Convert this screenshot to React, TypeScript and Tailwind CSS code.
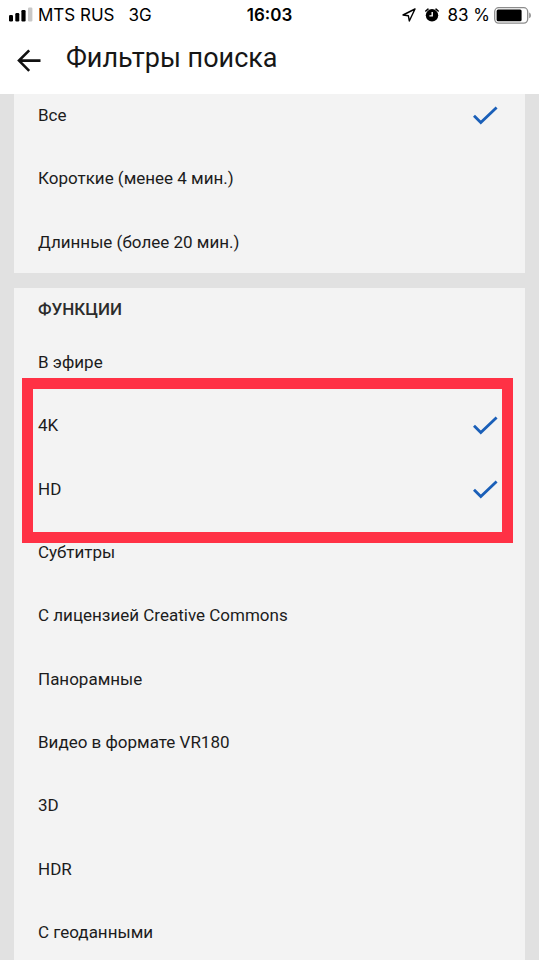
import React from 'react';

type Option = { label: string; checked?: boolean };

const durations: Option[] = [
  { label: 'Все', checked: true },
  { label: 'Короткие (менее 4 мин.)' },
  { label: 'Длинные (более 20 мин.)' },
];

const features: Option[] = [
  { label: 'В эфире' },
  { label: '4K', checked: true },
  { label: 'HD', checked: true },
  { label: 'Субтитры' },
  { label: 'С лицензией Creative Commons' },
  { label: 'Панорамные' },
  { label: 'Видео в формате VR180' },
  { label: '3D' },
  { label: 'HDR' },
  { label: 'С геоданными' },
];

const StatusBar = () => (
  <div className="grid h-[30px] grid-cols-[1fr_auto_1fr] items-center px-2 font-['Inter',sans-serif] text-[17px] leading-[30px] text-black">
    <div className="flex items-center">
      <svg width="26" height="16" viewBox="0 0 26 16" className="mr-1" aria-hidden="true">
        <rect x="1" y="8" width="4" height="6.5" rx="1.2" />
        <rect x="7.3" y="6" width="4" height="8.5" rx="1.2" />
        <rect x="13.4" y="3" width="4.2" height="11.5" rx="1.2" />
        <rect x="20" y="0.5" width="4.4" height="14" rx="1.2" fill="#c8c8c8" />
      </svg>
      <span>MTS RUS</span>
      <span className="ml-[14px]">3G</span>
    </div>
    <span className="px-px font-semibold">16:03</span>
    <div className="flex items-center justify-end">
      <svg width="14" height="14" viewBox="0 0 14 14" className="mr-2" aria-hidden="true">
        <path d="M13 1 1 7l5.4.8.9 5.2Z" fill="none" stroke="#000" strokeWidth="1.4" strokeLinejoin="round" />
      </svg>
      <svg width="16" height="14" viewBox="0 0 16 14" className="mr-2" aria-hidden="true">
        <circle cx="8" cy="7.3" r="6.2" />
        <path d="M1.8 3 4 1.2M14.2 3 12 1.2" stroke="#000" strokeWidth="1.6" strokeLinecap="round" />
        <path d="M8.2 4v3.9H5.4" fill="none" stroke="#fff" strokeWidth="1.4" />
      </svg>
      <span className="mr-1">83 %</span>
      <svg width="37" height="17" viewBox="0 0 37 17" aria-hidden="true">
        <rect x="0.7" y="0.7" width="33" height="15.4" rx="4" fill="none" stroke="#8c8c8c" strokeWidth="1.3" />
        <rect x="2.6" y="2.6" width="25" height="11.6" rx="1.5" />
        <path d="M35.2 5.6c2.2.8 2.2 4.8 0 5.6Z" fill="#8c8c8c" />
      </svg>
    </div>
  </div>
);

const OptionRow = ({ option, type, name }: { option: Option; type: 'radio' | 'checkbox'; name: string }) => (
  <li>
    <label className="flex h-full items-center justify-between pt-px pr-[27px] pl-6">
      <span>{option.label}</span>
      <input type={type} name={name} defaultChecked={option.checked} className="peer sr-only" />
      <svg width="26" height="20" viewBox="0 0 26 20" className="invisible peer-checked:visible" aria-hidden="true">
        <path d="M2 10.7 8.8 17.6 24.6 2.4" fill="none" stroke="#1a5fb8" strokeWidth="2.8" />
      </svg>
    </label>
  </li>
);

const App = () => {
  return (
    <div className="flex h-screen flex-col overflow-hidden bg-[#e1e1e1] font-['Roboto',sans-serif] text-[17px] leading-6 text-[#1c1c1c]">
      <header className="relative z-10 bg-white">
        <StatusBar />
        <div className="flex h-16 items-start pl-4">
          <button type="button" aria-label="Назад" className="mt-[18px]">
            <svg width="26" height="26" viewBox="0 0 26 26" fill="none" stroke="#111" strokeWidth="2.6" aria-hidden="true">
              <path d="M24.5 12.6H3M13.2 2.4 3 12.6l10.2 10.2" />
            </svg>
          </button>
          <h1 className="mt-[10px] ml-6 text-[27px] leading-9 text-[#161616]">Фильтры поиска</h1>
        </div>
      </header>

      {/* scrolled a little, so the first row is partly under the header */}
      <main className="-mt-[11px] flex flex-col gap-[15px] px-[14px]">
        <section className="bg-[#f3f3f3]">
          <ul className="grid min-h-[190px] auto-rows-fr">
            {durations.map((option) => (
              <OptionRow key={option.label} option={option} type="radio" name="duration" />
            ))}
          </ul>
        </section>

        <section className="relative bg-[#f3f3f3]">
          <h2 className="px-6 pt-[9px] pb-[9px] font-medium text-[#2c2c2c]">ФУНКЦИИ</h2>
          <ul className="grid min-h-[633px] auto-rows-fr">
            {features.map((option) => (
              <OptionRow key={option.label} option={option} type="checkbox" name="features" />
            ))}
          </ul>
          <div className="pointer-events-none absolute top-[90px] right-3 left-2 h-[165px] border-[11px] border-[#ff3145]" />
        </section>
      </main>
    </div>
  );
};

export default App;
